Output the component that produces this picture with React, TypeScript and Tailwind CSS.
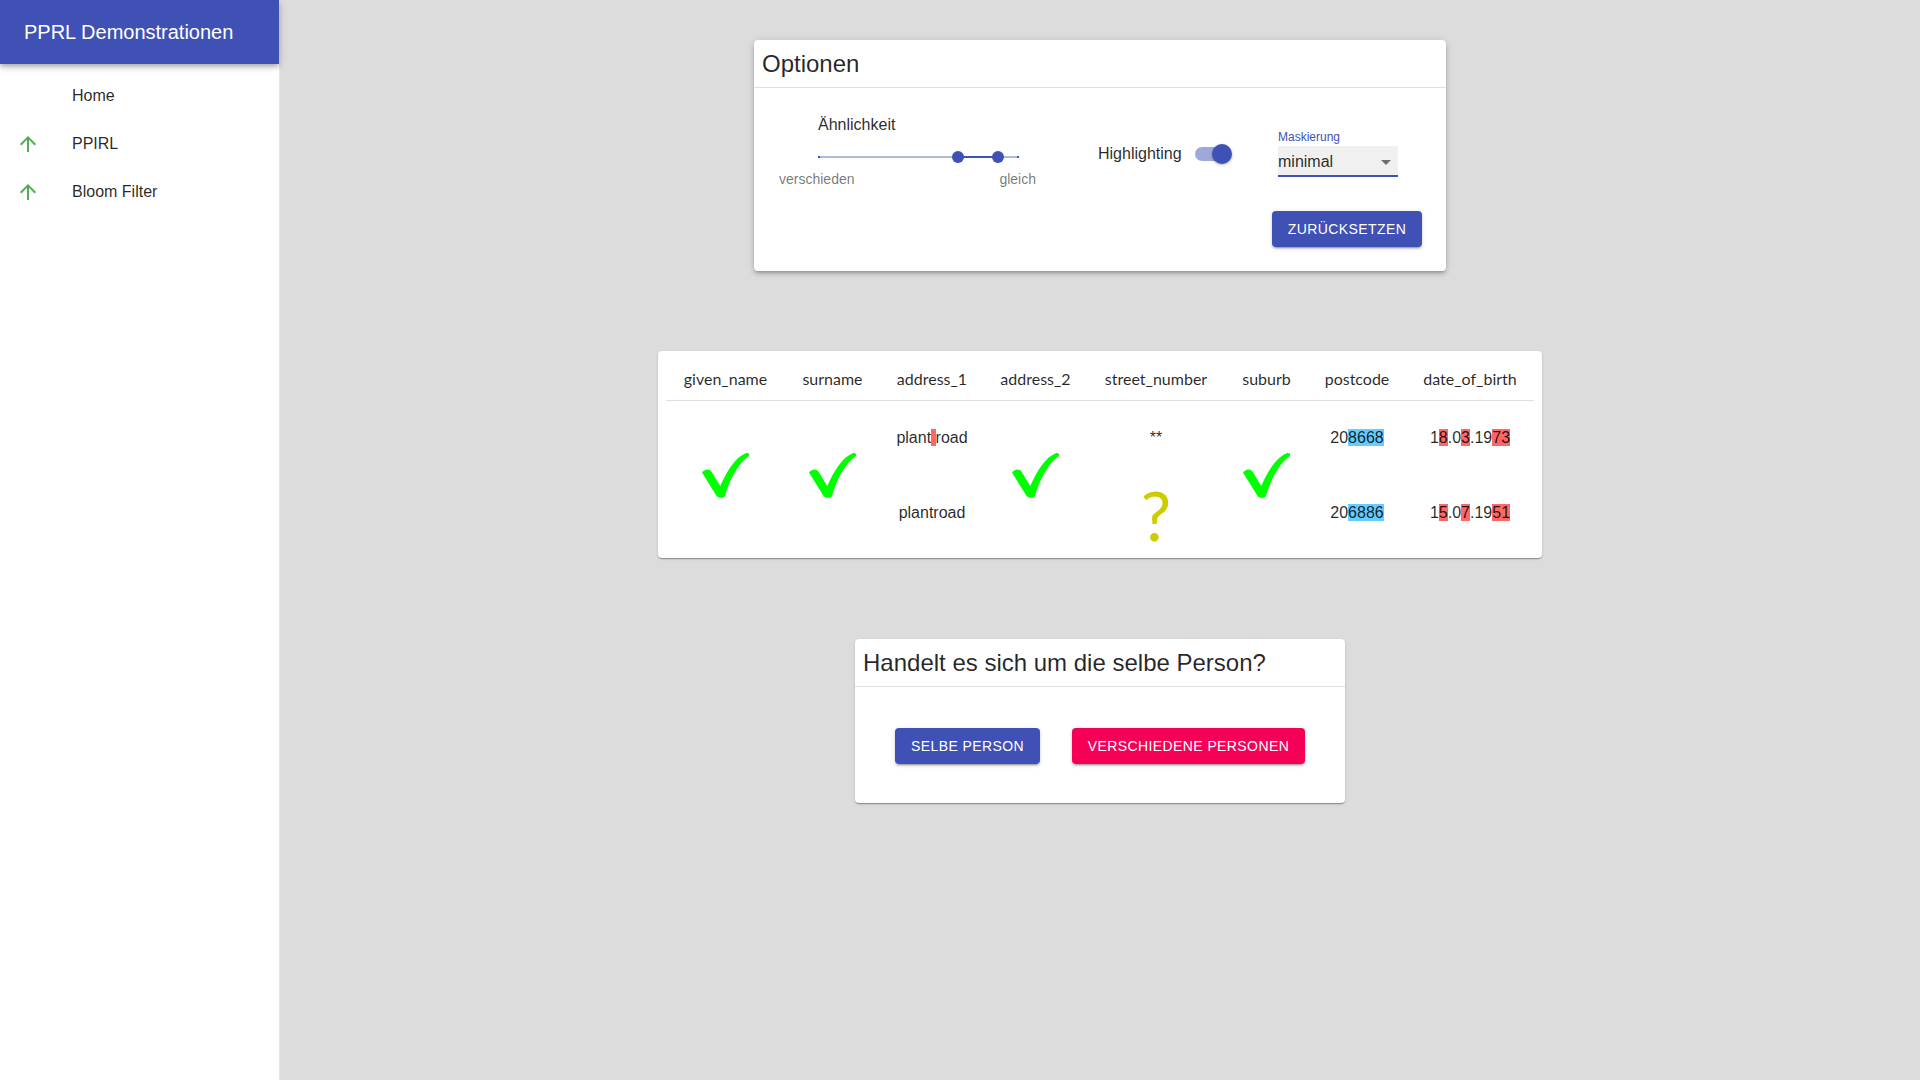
import type { ReactNode } from 'react'

const ELEV_1 =
  'shadow-[0px_2px_1px_-1px_rgba(0,0,0,0.2),0px_1px_1px_0px_rgba(0,0,0,0.14),0px_1px_3px_0px_rgba(0,0,0,0.12)]'
const ELEV_BTN =
  'shadow-[0px_3px_1px_-2px_rgba(0,0,0,0.2),0px_2px_2px_0px_rgba(0,0,0,0.14),0px_1px_5px_0px_rgba(0,0,0,0.12)]'

function ArrowUp() {
  return (
    <svg width="24" height="24" viewBox="0 0 24 24" fill="#4caf50">
      <path d="M4 12l1.41 1.41L11 7.83V20h2V7.83l5.58 5.59L20 12l-8-8-8 8z" />
    </svg>
  )
}

function Check() {
  return (
    <svg width="48" height="47" viewBox="0 0 50 48" className="mx-auto block">
      <path
        fill="#00ff00"
        d="M0 21 C3 17 8 17 10 20 L19 35 C26 19 35 5 45 1 C49 -1 51 3 47 5 C37 13 29 28 24 45 C23 48 17 48 15 45 Z"
      />
    </svg>
  )
}

function Red({ children }: { readonly children: ReactNode }) {
  return <span className="bg-[#ff6666]">{children}</span>
}

function Blue({ children }: { readonly children: ReactNode }) {
  return <span className="bg-[#66ccff]">{children}</span>
}

const NAV = [
  { label: 'Home', icon: false },
  { label: 'PPIRL', icon: true },
  { label: 'Bloom Filter', icon: true },
]

const COLUMNS = [
  { name: 'given_name', w: 'w-[119px]' },
  { name: 'surname', w: 'w-[95px]' },
  { name: 'address_1', w: 'w-[104px]' },
  { name: 'address_2', w: 'w-[103px]' },
  { name: 'street_number', w: 'w-[138px]' },
  { name: 'suburb', w: 'w-[83px]' },
  { name: 'postcode', w: 'w-[98px]' },
  { name: 'date_of_birth', w: 'w-[128px]' },
]

function Sidebar() {
  return (
    <aside className="w-[280px] shrink-0 bg-white border-r border-black/10 flex flex-col">
      <div className="relative z-10 h-16 bg-[#3f51b5] px-6 flex items-center shadow-[0px_2px_4px_-1px_rgba(0,0,0,0.2),0px_4px_5px_0px_rgba(0,0,0,0.14),0px_1px_10px_0px_rgba(0,0,0,0.12)]">
        <span className="text-white text-[20px] leading-8">PPRL Demonstrationen</span>
      </div>
      <nav className="pt-2">
        {NAV.map((item) => (
          <div key={item.label} className="h-12 flex items-center px-4">
            <div className="w-14 flex items-center">{item.icon ? <ArrowUp /> : null}</div>
            <span className="text-base text-black/85">{item.label}</span>
          </div>
        ))}
      </nav>
    </aside>
  )
}

function OptionsCard() {
  return (
    <div className="w-[692px] bg-white rounded shadow-[0px_3px_3px_-2px_rgba(0,0,0,0.2),0px_3px_4px_0px_rgba(0,0,0,0.14),0px_1px_8px_0px_rgba(0,0,0,0.12)]">
      <div className="h-12 px-2 flex items-center border-b border-[#e0e0e0]">
        <h2 className="text-2xl leading-8 text-black/85">Optionen</h2>
      </div>

      <div className="flex items-start pt-[25px] pl-[25px]">
        {/* similarity slider */}
        <div className="w-[257px]">
          <div className="pl-[39px] text-base leading-6 text-black/85">Ähnlichkeit</div>
          <div className="pl-[39px] mt-2">
            <div className="relative w-[201px] h-6">
              <div className="absolute left-0 right-0 top-[11px] h-[2px] bg-[#3f51b5]/40" />
              <div className="absolute left-0 top-[11px] w-[2px] h-[2px] bg-[#3f51b5]" />
              <div className="absolute right-0 top-[11px] w-[2px] h-[2px] bg-[#3f51b5]" />
              <div className="absolute left-[140px] w-[40px] top-[11px] h-[2px] bg-[#3f51b5]" />
              <div className="absolute left-[134px] top-[6px] w-3 h-3 rounded-full bg-[#3f51b5]" />
              <div className="absolute left-[174px] top-[6px] w-3 h-3 rounded-full bg-[#3f51b5]" />
            </div>
          </div>
          <div className="flex justify-between text-sm leading-5 text-black/55">
            <span>verschieden</span>
            <span>gleich</span>
          </div>
        </div>

        {/* highlighting switch */}
        <div className="ml-[62px] mt-[29px] w-[134px] flex items-center justify-between">
          <span className="text-base leading-6 text-black/85">Highlighting</span>
          <div className="relative w-[37px] h-5">
            <div className="absolute left-0 top-[3px] w-[34px] h-[14px] rounded-full bg-[#9fa8da]" />
            <div className="absolute right-0 top-0 w-5 h-5 rounded-full bg-[#3f51b5] shadow-[0px_1px_3px_rgba(0,0,0,0.3)]" />
          </div>
        </div>

        {/* masking select */}
        <div className="ml-[46px] mt-4 w-[120px]">
          <div className="text-xs leading-4 text-[#3f51b5]">Maskierung</div>
          <div className="relative mt-px h-[31px] bg-[#f0f0f0] border-b-2 border-[#3f51b5] flex items-center pt-[2px]">
            <span className="text-base leading-6 text-black/85">minimal</span>
            <svg
              width="24"
              height="24"
              viewBox="0 0 24 24"
              fill="rgba(0,0,0,0.54)"
              className="absolute right-0 top-[4px]"
            >
              <path d="M7 10l5 5 5-5z" />
            </svg>
          </div>
        </div>
      </div>

      <div className="flex justify-end pr-6 pb-6 mt-[22px]">
        <button
          className={`w-[150px] h-9 rounded bg-[#3f51b5] text-white text-sm uppercase tracking-[0.4px] ${ELEV_BTN}`}
        >
          Zurücksetzen
        </button>
      </div>
    </div>
  )
}

function CompareTable() {
  const cell = 'p-0 text-center align-middle text-base text-black/85'
  return (
    <div className={`w-[884px] bg-white rounded p-2 mt-20 ${ELEV_1}`}>
      <table className="w-[868px] table-fixed border-collapse">
        <thead>
          <tr className="h-[41px] border-b border-[#e0e0e0]">
            {COLUMNS.map((c) => (
              <th
                key={c.name}
                className={`${c.w} p-0 text-center align-middle font-normal text-base text-black/85 font-['Lato',sans-serif]`}
              >
                {c.name}
              </th>
            ))}
          </tr>
        </thead>
        <tbody>
          <tr className="h-[75px]">
            <td rowSpan={2} className={cell}><Check /></td>
            <td rowSpan={2} className={cell}><Check /></td>
            <td className={cell}>plant<Red> </Red>road</td>
            <td rowSpan={2} className={cell}><Check /></td>
            <td className={cell}>**</td>
            <td rowSpan={2} className={cell}><Check /></td>
            <td className={cell}>20<Blue>8668</Blue></td>
            <td className={cell}>
              1<Red>8</Red>.0<Red>3</Red>.19<Red>73</Red>
            </td>
          </tr>
          <tr className="h-[75px]">
            <td className={cell}>plantroad</td>
            <td className={cell}>
              <span className="inline-block text-[68px] leading-none text-[#cccc00] font-['Lato',sans-serif] translate-y-[2px]">?</span>
            </td>
            <td className={cell}>20<Blue>6886</Blue></td>
            <td className={cell}>
              1<Red>5</Red>.0<Red>7</Red>.19<Red>51</Red>
            </td>
          </tr>
        </tbody>
      </table>
    </div>
  )
}

function DecisionCard() {
  return (
    <div className={`w-[490px] bg-white rounded mt-[81px] ${ELEV_1}`}>
      <div className="h-12 px-2 flex items-center border-b border-[#e0e0e0]">
        <h2 className="text-2xl leading-8 text-black/85">Handelt es sich um die selbe Person?</h2>
      </div>
      <div className="flex gap-8 pl-10 pt-[41px] pb-[39px]">
        <button
          className={`w-[145px] h-9 rounded bg-[#3f51b5] text-white text-sm uppercase tracking-[0.4px] ${ELEV_BTN}`}
        >
          Selbe Person
        </button>
        <button
          className={`w-[233px] h-9 rounded bg-[#f50057] text-white text-sm uppercase tracking-[0.4px] ${ELEV_BTN}`}
        >
          Verschiedene Personen
        </button>
      </div>
    </div>
  )
}

export default function App() {
  return (
    <div className="flex min-h-screen font-['Liberation_Sans',Arial,sans-serif]">
      <Sidebar />
      <main className="flex-1 bg-[#dcdcdc] flex flex-col items-center pt-10">
        <OptionsCard />
        <CompareTable />
        <DecisionCard />
      </main>
    </div>
  )
}
